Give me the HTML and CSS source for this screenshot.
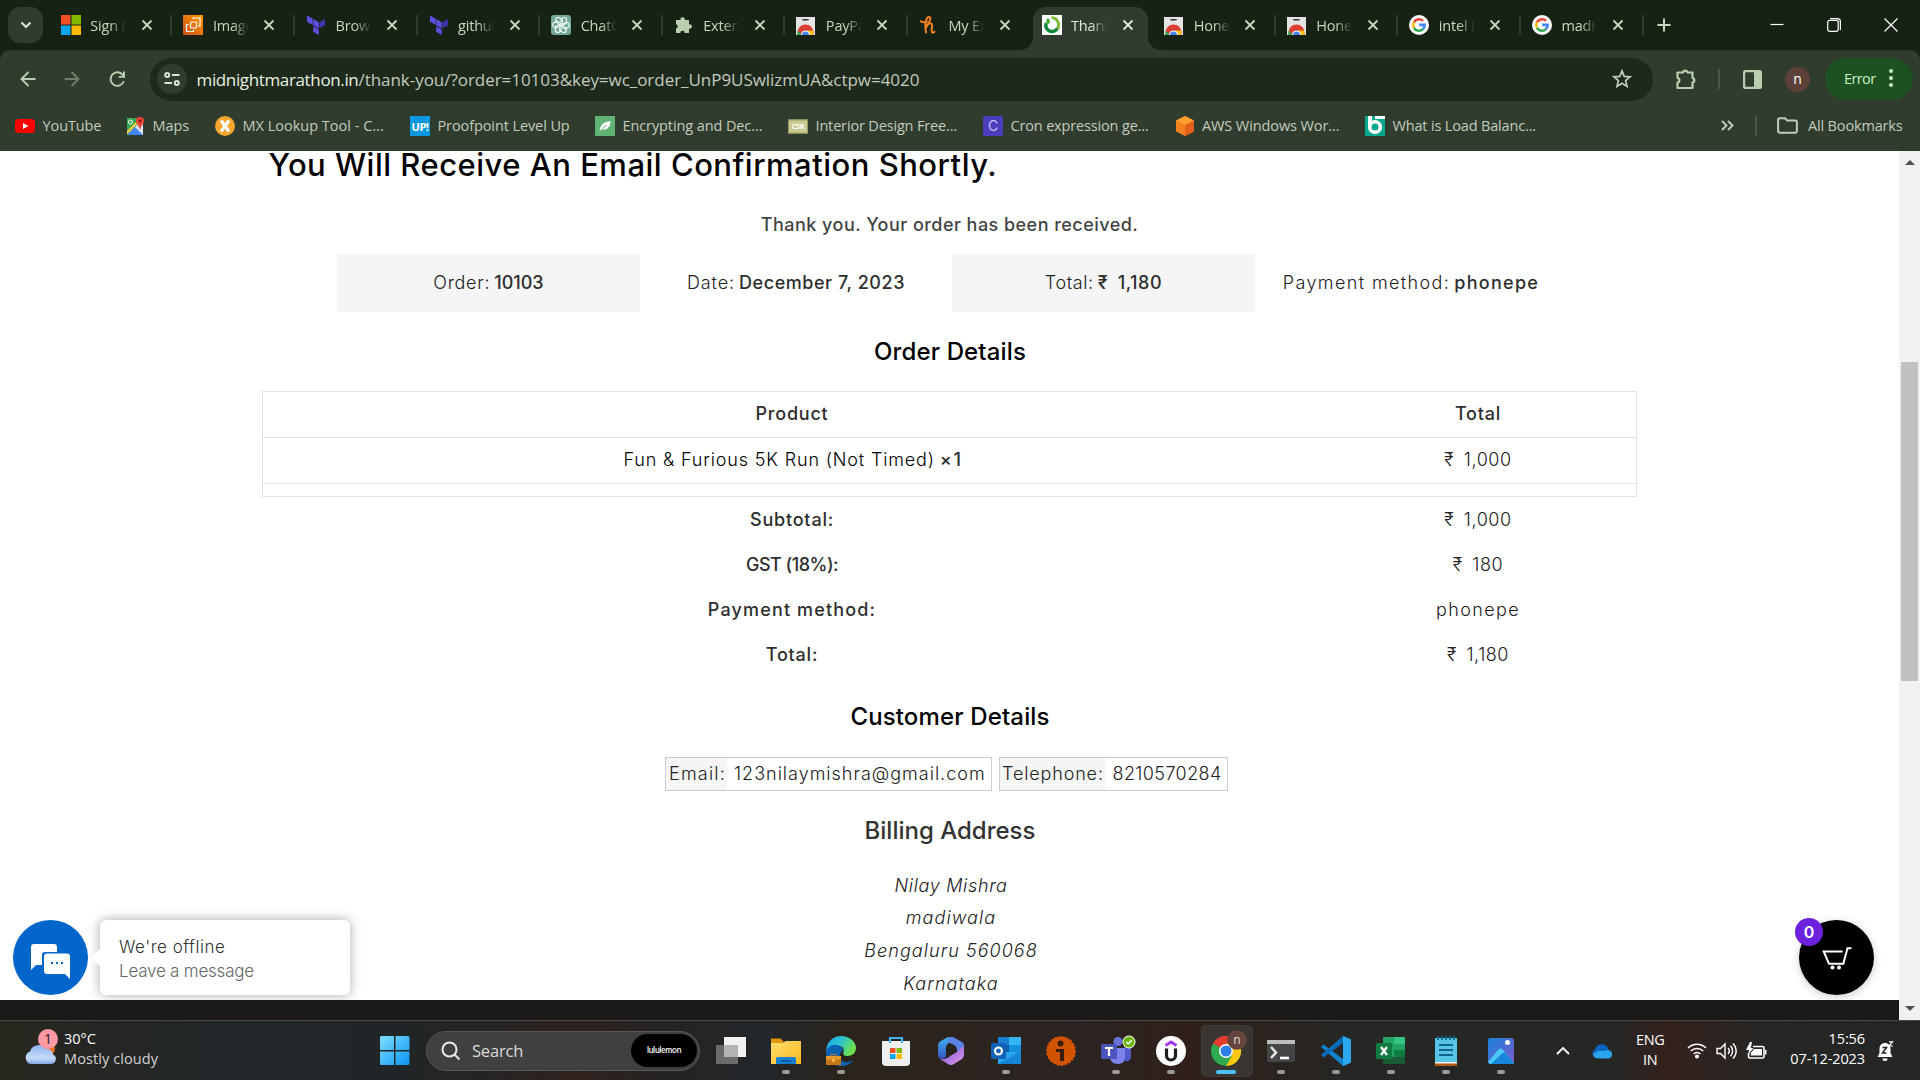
FILE: index.html
```html
<!DOCTYPE html>
<html lang="en">
<head>
<meta charset="utf-8">
<title>Thank You</title>
<link rel="stylesheet" href="styles.css">
</head>
<body>
<svg class="defs" width="0" height="0">
  <defs>
    <linearGradient id="gWin" x1="0" y1="0" x2="1" y2="1"><stop offset="0" stop-color="#7fe0ff"/><stop offset="1" stop-color="#0a93f5"/></linearGradient>
    <linearGradient id="gCloud" x1="0" y1="0" x2="0" y2="1"><stop offset="0" stop-color="#8db4f3"/><stop offset=".7" stop-color="#c6dbfa"/><stop offset="1" stop-color="#7fa5e2"/></linearGradient>
    <linearGradient id="gAws" x1="0" y1="1" x2="1" y2="0"><stop offset="0" stop-color="#c8511b"/><stop offset="1" stop-color="#f90"/></linearGradient>
    <linearGradient id="gEdge" x1="0" y1="0" x2="1" y2=".4"><stop offset="0" stop-color="#1b9de2"/><stop offset=".5" stop-color="#2bc3d2"/><stop offset="1" stop-color="#6be04b"/></linearGradient>
    <linearGradient id="gFolder" x1="0" y1="0" x2="1" y2="1"><stop offset="0" stop-color="#ffdf71"/><stop offset="1" stop-color="#f9b81d"/></linearGradient>
    <linearGradient id="gCopA" x1="0" y1="0" x2="0" y2="1"><stop offset="0" stop-color="#3bb4ee"/><stop offset="1" stop-color="#3a4fc4"/></linearGradient>
    <linearGradient id="gCopB" x1="0" y1="0" x2="1" y2="1"><stop offset="0" stop-color="#6a4fd8"/><stop offset="1" stop-color="#e79be8"/></linearGradient>
    <linearGradient id="gPhoto" x1="0" y1="0" x2="1" y2="1"><stop offset="0" stop-color="#1685dc"/><stop offset="1" stop-color="#8155c9"/></linearGradient>
    <linearGradient id="gGreen" x1="0" y1="1" x2="1" y2="0"><stop offset="0" stop-color="#0d8a3c"/><stop offset="1" stop-color="#9ac93a"/></linearGradient>
    <symbol id="x" viewBox="0 0 12 12"><path d="M1.500 1.500l9 9M10.500 1.500l-9 9" stroke="currentColor" stroke-width="1.800"/></symbol>
    <symbol id="terraform" viewBox="0 0 20 20"><path d="M1 .5l5.600 3.200v6.300L1 6.800z M7.200 4l5.600 3.200v6.300L7.200 10.300z M7.200 11.200l5.600 3.200V20l-5.600-3.200z" fill="#5f4ee0"/><path d="M19 4v6.300l-5.600 3.200V7.200z" fill="#4234a8"/></symbol>
    <symbol id="store" viewBox="0 0 20 20"><path d="M0 2h19v18H0z" fill="#e4e4e4"/><path d="M7 4.800h5" stroke="#333" stroke-width="1.600" stroke-linecap="round"/><path d="M1.500 20v-2.500a8 8 0 0 1 16 0V20z" fill="#df3e34"/><path d="M1.500 20v-4.500l5 4.500z" fill="#28a34c"/><path d="M17.500 20v-4.500H11l2 4.500z" fill="#fbc417"/><path d="M5 20a4.500 4.500 0 0 1 9 0z" fill="#fff"/><path d="M6 20a3.500 3.500 0 0 1 7 0z" fill="#4286f5"/></symbol>
    <symbol id="google" viewBox="0 0 20 20"><circle cx="10" cy="10" r="10" fill="#fff"/><g fill="none" stroke-width="2.600"><path d="M5 7.200A5.700 5.700 0 0 1 14 5.900" stroke="#ea4335"/><path d="M5 12.800a5.900 5.900 0 0 1 0-5.600" stroke="#fbbc05"/><path d="M14 14.100A5.700 5.700 0 0 1 5 12.800" stroke="#34a853"/><path d="M10.200 9.900h5.400a5.600 5.600 0 0 1-1.700 4.200" stroke="#4285f4"/></g></symbol>
  </defs>
</svg>

<header class="tabstrip">
  <button class="tab-search"><svg width="12" height="8" viewBox="0 0 12 8"><path d="M1.500 1.500L6 6l4.500-4.500" fill="none" stroke="#d6e5ce" stroke-width="2.200"/></svg></button>
  <div class="tabs">
    <div class="tab"><svg class="fav" viewBox="0 0 20 20"><path d="M0 0h9.500v9.500H0z" fill="#f25022"/><path d="M10.500 0H20v9.500h-9.500z" fill="#7fba00"/><path d="M0 10.500h9.500V20H0z" fill="#00a4ef"/><path d="M10.500 10.500H20V20h-9.500z" fill="#ffb900"/></svg><span>Sign in</span><svg class="close"><use href="#x"/></svg></div>
    <div class="tab"><svg class="fav" viewBox="0 0 20 20"><path d="M0 0h20v20H0z" fill="url(#gAws)"/><g fill="none" stroke="#fff" stroke-width="1.200"><rect x="7.500" y="7" width="6" height="6" rx="1"/><path d="M10 4V3h7v8h-2M5.500 9.500H3.500v7h7V15"/></g></svg><span>Images</span><svg class="close"><use href="#x"/></svg></div>
    <div class="tab"><svg class="fav"><use href="#terraform"/></svg><span>Brows</span><svg class="close"><use href="#x"/></svg></div>
    <div class="tab"><svg class="fav"><use href="#terraform"/></svg><span>github</span><svg class="close"><use href="#x"/></svg></div>
    <div class="tab"><svg class="fav" viewBox="0 0 20 20"><rect width="20" height="20" rx="3" fill="#74aa9c"/><g fill="none" stroke="#fff" stroke-width="1.100"><path id="petal" d="M10 7.200V5.500a3 3 0 0 1 5.500-1.600v4.300L10 11.300"/><use href="#petal" transform="rotate(60 10 10)"/><use href="#petal" transform="rotate(120 10 10)"/><use href="#petal" transform="rotate(180 10 10)"/><use href="#petal" transform="rotate(240 10 10)"/><use href="#petal" transform="rotate(300 10 10)"/></g></svg><span>ChatG</span><svg class="close"><use href="#x"/></svg></div>
    <div class="tab"><svg class="fav" viewBox="0 0 20 20"><path d="M2 5h4.500a2.200 2.200 0 1 1 4.200 0H15v4.300a2.300 2.300 0 1 1 0 4.400V18h-4.300a2.200 2.200 0 0 0-4.400 0H2v-4.500a2.200 2.200 0 0 0 0-4.300z" fill="#b9cfb0"/></svg><span>Exten</span><svg class="close"><use href="#x"/></svg></div>
    <div class="tab"><svg class="fav"><use href="#store"/></svg><span>PayPa</span><svg class="close"><use href="#x"/></svg></div>
    <div class="tab"><svg class="fav" viewBox="0 0 20 20"><path d="M1.800 6.200c1.500 1.500 3.700 1.400 6 .3M7 17.500c-1-6-.8-11 .8-14 1.200-2.300 3.700-2 3.500.2C11 7 8.500 9 7.300 12c1.200-2.500 3-4 4.700-3.600 2.300.6.500 4.600.6 7 .1 2.700 1.900 2.700 2.700 1.300" fill="none" stroke="#f5821f" stroke-width="2" stroke-linecap="round" stroke-linejoin="round"/></svg><span>My Ex</span><svg class="close"><use href="#x"/></svg></div>
    <div class="tab active"><svg class="shape" viewBox="0 0 141 43"><path d="M0 43a13 13 0 0 0 13-13V13A13 13 0 0 1 26 0h89a13 13 0 0 1 13 13v17a13 13 0 0 0 13 13z" fill="#303d2e"/></svg><svg class="fav" viewBox="0 0 20 20"><path d="M0 0h20v20H0z" fill="#fff"/><path d="M4.200 8A6 6 0 1 0 15.800 12.500" fill="none" stroke="#0f8a3c" stroke-width="3.400"/><path d="M9.500 2.500A7.500 7.500 0 0 1 15.500 14" fill="none" stroke="#7dbb3a" stroke-width="2.800"/><path d="M5.500 3c2 .8 2.800 2.200 2.600 4.500L5.500 10C3.500 7.500 4 5 5.500 3z" fill="#4fae3b"/></svg><span>Thank</span><svg class="close"><use href="#x"/></svg></div>
    <div class="tab"><svg class="fav"><use href="#store"/></svg><span>Honey</span><svg class="close"><use href="#x"/></svg></div>
    <div class="tab"><svg class="fav"><use href="#store"/></svg><span>Honey</span><svg class="close"><use href="#x"/></svg></div>
    <div class="tab"><svg class="fav"><use href="#google"/></svg><span>intel l</span><svg class="close"><use href="#x"/></svg></div>
    <div class="tab"><svg class="fav"><use href="#google"/></svg><span>madiw</span><svg class="close"><use href="#x"/></svg></div>
  </div>
  <svg class="new-tab" width="14" height="14" viewBox="0 0 14 14"><path d="M7 .5v13M.5 7h13" stroke="#c5d8bc" stroke-width="2"/></svg>
  <div class="win-controls">
    <svg width="14" height="14" viewBox="0 0 14 14"><path d="M.5 6.500h13" stroke="#fff" stroke-width="1.200"/></svg>
    <svg width="14" height="14" viewBox="0 0 14 14" fill="none" stroke="#fff" stroke-width="1.200"><rect x=".7" y="2.300" width="10.500" height="11" rx="2"/><path d="M3 .7h7.500a3 3 0 0 1 2.900 3V12"/></svg>
    <svg width="14" height="14" viewBox="0 0 14 14"><path d="M.5.5l13 13M13.500.5l-13 13" stroke="#fff" stroke-width="1.200"/></svg>
  </div>
</header>

<div class="toolbar-wrap">
<div class="toolbar">
  <div class="nav">
    <svg width="16" height="16" viewBox="0 0 16 16"><path d="M15.500 8H1.500M8.500 1L1.500 8l7 7" fill="none" stroke="#b9cfb0" stroke-width="1.900"/></svg>
    <svg width="16" height="16" viewBox="0 0 16 16"><path d="M.5 8h14M7.500 1l7 7-7 7" fill="none" stroke="#6f7f69" stroke-width="1.900"/></svg>
    <svg width="17" height="17" viewBox="0 0 17 17"><path d="M14.800 10.200A6.800 6.800 0 1 1 13.800 4l1 1.200" fill="none" stroke="#b9cfb0" stroke-width="1.900"/><path d="M16 .5v6.300H9.700V5H14V.5z" fill="#b9cfb0"/></svg>
  </div>
  <div class="omnibox">
    <span class="site-info"><svg width="16" height="14" viewBox="0 0 16 14" fill="none" stroke="#d6e5ce" stroke-width="2"><circle cx="3.200" cy="3" r="2"/><path d="M8 3h7.500M.5 11H8"/><circle cx="12.800" cy="11" r="2"/></svg></span>
    <span class="url"><b>midnightmarathon.in</b><i>/thank-you/?order=10103&amp;key=wc_order_UnP9USwlizmUA&amp;ctpw=4020</i></span>
    <svg width="20" height="20" viewBox="0 0 20 20"><path d="M10 1.900l2.200 5.500 5.900.4-4.500 3.800 1.400 5.800L10 14.200l-5 3.200 1.400-5.800L1.900 7.800l5.900-.4z" fill="none" stroke="#c3cabf" stroke-width="1.700"/></svg>
  </div>
  <div class="tools">
    <svg width="22" height="22" viewBox="0 0 22 22"><path d="M2.500 4.500H8a2.300 2.300 0 0 1 4.500 0h5V10a2.300 2.300 0 0 1 0 4.500v5.500h-15v-5.500a2.400 2.400 0 0 0 0-4.700z" fill="none" stroke="#b9cfb0" stroke-width="2.200" stroke-linejoin="round"/></svg>
    <i class="vsep"></i>
    <svg width="19" height="19" viewBox="0 0 19 19"><rect x="1.100" y="1.100" width="16.800" height="16.800" rx="1.500" fill="none" stroke="#b9cfb0" stroke-width="2.200"/><path d="M11 1h7v17h-7z" fill="#b9cfb0"/></svg>
    <span class="avatar">n</span>
    <span class="error">Error<svg width="4" height="18" viewBox="0 0 4 18" fill="#c9efc0"><circle cx="2" cy="2" r="2"/><circle cx="2" cy="9" r="2"/><circle cx="2" cy="16" r="2"/></svg></span>
  </div>
</div>
</div>

<nav class="bookmarks">
  <div class="items">
    <a><svg viewBox="0 0 20 20"><rect y="3" width="20" height="14" rx="3.500" fill="#f00"/><path d="M8 7l5.500 3L8 13z" fill="#fff"/></svg>YouTube</a>
    <a><svg viewBox="0 0 20 20"><path d="M2 2h16v17H2z" fill="#34a853"/><path d="M2 19L18 3v16z" fill="#d9e4ee"/><path d="M2 19l8-8 8 8z" fill="#4285f4"/><path d="M2 15l12-12h3L2 18z" fill="#fbcd3c"/><path d="M15 1a4 4 0 0 1 4 4c0 3-3 4-4 9-1-5-4-6-4-9a4 4 0 0 1 4-4z" fill="#ea4335"/><circle cx="15" cy="5" r="1.500" fill="#7d1a12"/><circle cx="5.500" cy="6" r="2" fill="none" stroke="#fff"/></svg>Maps</a>
    <a class="mx"><svg viewBox="0 0 20 20"><circle cx="10" cy="10" r="10" fill="#f7a52c"/><path d="M6 4.500l8 11M14 4.500l-8 11" stroke="#fff" stroke-width="3.200"/></svg>MX Lookup Tool - C...</a>
    <a><svg viewBox="0 0 20 20"><path d="M0 0h20v20H0z" fill="#0a98e0"/><text x="10" y="15" class="up">UP!</text></svg>Proofpoint Level Up</a>
    <a><svg viewBox="0 0 20 20"><path d="M0 0h20v20H0z" fill="#62b273"/><path d="M4.500 16C5 9 8 6 15.500 5c0 6-3 9-8.500 8.500z" fill="#fff"/><path d="M4.500 16l7-7" stroke="#62b273"/></svg>Encrypting and Dec...</a>
    <a class="tight"><svg viewBox="0 0 20 20"><path d="M0 3.500h20v14H0z" fill="#c9ca94"/><path d="M.5 4h19v13H.5z" fill="none" stroke="#9a9a5a"/><text x="10" y="13" class="csk">CSK</text></svg>Interior Design Free...</a>
    <a class="tight"><svg viewBox="0 0 20 20"><rect width="20" height="20" rx="2" fill="#4b3dbb"/><text x="10" y="15" class="cron">C</text></svg>Cron expression ge...</a>
    <a><svg viewBox="0 0 20 20"><path d="M10 0l9 4.500v11L10 20l-9-4.500v-11z" fill="#f58220"/><path d="M10 0l9 4.500L10 9 1 4.500z" fill="#fda02e"/><path d="M10 9l9-4.500v11L10 20z" fill="#e4601b"/></svg>AWS Windows Wor...</a>
    <a class="tight"><svg viewBox="0 0 20 20"><path d="M0 0h20v20H0z" fill="#05a88b"/><path d="M5 0v10" stroke="#fff" stroke-width="4"/><circle cx="10" cy="11" r="5.300" fill="none" stroke="#fff" stroke-width="3.600"/><path d="M10 0h10v3H10z" fill="#fff"/></svg>What is Load Balanc...</a>
  </div>
  <svg class="more" width="13" height="11" viewBox="0 0 13 11"><path d="M1 1l4.500 4.500L1 10M7 1l4.500 4.500L7 10" fill="none" stroke="#c3cabf" stroke-width="1.900"/></svg>
  <i class="vsep"></i>
  <a class="all"><svg viewBox="0 0 21 17"><path d="M1.100 3a1.800 1.800 0 0 1 1.800-1.800h5l2.300 2.300h8a1.800 1.800 0 0 1 1.700 1.800V14a1.800 1.800 0 0 1-1.800 1.800H2.900A1.800 1.800 0 0 1 1.100 14z" fill="none" stroke="#c3cabf" stroke-width="2"/></svg>All Bookmarks</a>
</nav>

<div class="viewport">
  <main class="page">
    <div class="content">
      <h1>You Will Receive An Email Confirmation Shortly.</h1>
      <p class="thanks">Thank you. Your order has been received.</p>
      <ul class="overview">
        <li><span class="k-order">Order:</span> <strong class="v-order">10103</strong></li>
        <li><span class="k-date">Date:</span> <strong class="v-date">December 7, 2023</strong></li>
        <li><span class="k-total">Total:</span> <strong class="amount">₹ 1,180</strong></li>
        <li><span class="k-pay">Payment method:</span> <strong class="v-pay">phonepe</strong></li>
      </ul>
      <h2 class="h-order">Order Details</h2>
      <div class="table">
        <div class="row head"><b>Product</b><b>Total</b></div>
        <div class="row"><span class="item">Fun &amp; Furious 5K Run (Not Timed) <strong>× 1</strong></span><span class="amount">₹ 1,000</span></div>
        <div class="row empty"></div>
      </div>
      <div class="totals">
        <div class="row"><b>Subtotal:</b><span class="amount">₹ 1,000</span></div>
        <div class="row"><b class="gst">GST (18%):</b><span class="amount">₹ 180</span></div>
        <div class="row"><b class="pm">Payment method:</b><span class="v-phone">phonepe</span></div>
        <div class="row"><b>Total:</b><span class="amount">₹ 1,180</span></div>
      </div>
      <h2 class="h-customer">Customer Details</h2>
      <dl class="customer">
        <div><dt>Email:</dt><dd>123nilaymishra@gmail.com</dd></div>
        <div><dt class="tel">Telephone:</dt><dd class="telno">8210570284</dd></div>
      </dl>
      <h2 class="h-billing">Billing Address</h2>
      <address><span class="a1">Nilay Mishra</span><span>madiwala</span><span>Bengaluru 560068</span><span>Karnataka</span></address>
    </div>
    <footer class="page-footer"></footer>
    <div class="chat">
      <span class="chat-btn"><svg width="40" height="36" viewBox="0 0 40 36"><path d="M3 0h20a3 3 0 0 1 3 3v5H14a3 3 0 0 0-3 3v10H5l-5 5V3a3 3 0 0 1 3-3z" fill="#fff"/><path d="M16 9.500h20a3 3 0 0 1 3 3V35l-5-5H16a3 3 0 0 1-3-3V12.500a3 3 0 0 1 3-3z" fill="#fff"/><path d="M20 18h2v2h-2zM25 18h2v2h-2zM30 18h2v2h-2z" fill="#06c"/></svg></span>
      <div class="bubble"><p>We're offline</p><p class="sub">Leave a message</p></div>
    </div>
    <div class="cart"><svg width="30" height="23" viewBox="0 0 30 23"><path d="M29.500 1.200h-4L21.300 16.800H7L1.700 4.500h19" fill="none" stroke="#fff" stroke-width="2"/><circle cx="10.500" cy="20.500" r="2" fill="#fff"/><circle cx="17" cy="20.500" r="2" fill="#fff"/></svg><span class="count">0</span></div>
  </main>
  <div class="scrollbar"><i class="up-arrow"></i><i class="thumb"></i><i class="down-arrow"></i></div>
</div>

<footer class="taskbar">
  <div class="weather">
    <svg width="36" height="36" viewBox="0 0 36 36"><circle cx="25" cy="20" r="6" fill="#f2701d"/><path d="M7 35a6.500 6.500 0 0 1-1-12.500A9 9 0 0 1 22 20a6 6 0 0 1 7 5.500A5 5 0 0 1 27 35z" fill="url(#gCloud)"/><circle cx="24" cy="10" r="10" fill="#ff99a4"/><text x="24" y="15" class="wbadge">1</text></svg>
    <div><p>30°C</p><p class="cond">Mostly cloudy</p></div>
  </div>
  <svg class="start" width="30" height="30" viewBox="0 0 30 30" fill="url(#gWin)"><path d="M0 1.500A1.500 1.500 0 0 1 1.500 0H14v14H0zM15.500 0H28a1.500 1.500 0 0 1 1.500 1.500V14h-14zM0 15.500h14V29H1.500A1.500 1.500 0 0 1 0 27.500zM15.500 15.500h14v12A1.500 1.500 0 0 1 28 29H15.500z"/></svg>
  <div class="search"><svg width="20" height="20" viewBox="0 0 20 20" fill="none" stroke="#e8e8e8" stroke-width="2"><circle cx="8.500" cy="8.500" r="7"/><path d="M13.500 13.500l5 5"/></svg><span>Search</span><em>lululemon</em></div>
  <div class="apps">
    <span><svg viewBox="0 0 30 30"><path d="M0 9h22v19H0z" fill="#6a6a6a"/><path d="M8 1h22v20H8z" fill="#f1f1f1"/><path d="M8 9h14v12H8z" fill="#b4b4b4"/></svg></span>
    <span class="run"><svg viewBox="0 0 30 30"><path d="M0 2.500h9.500l3 3V12H0z" fill="#e0950d"/><path d="M0 7h12l2.500-2H30v23H0z" fill="url(#gFolder)"/><path d="M5 28v-5a2 2 0 0 1 2-2h16a2 2 0 0 1 2 2v5z" fill="#1480d4"/><path d="M10 25h10" stroke="#0a4f94" stroke-width="1.500"/></svg></span>
    <span class="run"><svg viewBox="0 0 30 30"><path d="M0 16C0 6 7 0 15 0s15 5 15 12c0 5-4 8-8.500 8-3 0-5-1.500-4-4 .8-2 0-6-5-6C7 10 1 12 0 16z" fill="url(#gEdge)"/><path d="M0 16c1-5 6-8 11-7 4 .5 6 3 5.500 6-1 0-3 2-2.500 6 .5 5 6 7 13 3-2 4-7 6-12 6C6 30 0 24 0 16z" fill="#0c62b4"/><path d="M0 20h15v9H0z" fill="#c5761a"/><path d="M0 20h15v3.500H0z" fill="#e39b2b"/><path d="M5 20v-1.500h5V20" fill="none" stroke="#c5761a"/><path d="M6.500 23h2v3h-2z" fill="#ffd35c"/></svg></span>
    <span><svg viewBox="0 0 30 30"><path d="M1 5h28v21a4 4 0 0 1-4 4H5a4 4 0 0 1-4-4z" fill="#efefef"/><path d="M9 7V2h12v5" fill="none" stroke="#3db4ee" stroke-width="2.200"/><path d="M9 12h5.500v5H9z" fill="#f25022"/><path d="M15.500 12H21v5h-5.500z" fill="#7fba00"/><path d="M9 18h5.500v5H9z" fill="#00a4ef"/><path d="M15.500 18H21v5h-5.500z" fill="#ffb900"/></svg></span>
    <span><svg viewBox="0 0 30 30"><path d="M12 1L4 5.500A5 5 0 0 0 2 10v9c0 3 2 4.500 4.500 3.500L10 21v-9c0-2.500 1-4 3-5l4-6z" fill="url(#gCopA)"/><path d="M12 1h5l9 5a4 4 0 0 1 2 4v6l-7 2v-4c0-2-1-4-3-5l-6-3z" fill="#5b83e6"/><path d="M28 10v9a5 5 0 0 1-2 4l-8 5c-2 1.300-4 1.300-6 0l-8-5c5 .5 8-1 10-3l7-4c2-1.500 3-4 7-6z" fill="url(#gCopB)"/><circle cx="15" cy="14" r="4.500" fill="#26231f"/></svg></span>
    <span class="run"><svg viewBox="0 0 30 30"><path d="M7 1h23v27H7z" fill="#1a7fd0"/><path d="M18 1h12v8H18z" fill="#35b5f1"/><path d="M18 9h12v7H18z" fill="#1490df"/><path d="M7 9h11v7H7z" fill="#0f5ea8"/><path d="M7 16h23v12H7z" fill="#2ba5ea"/><path d="M7 28l23-13v13z" fill="#1685d6"/><rect y="7" width="15" height="16" rx="1.500" fill="#0f62b5"/><circle cx="7.500" cy="15" r="3.500" fill="none" stroke="#fff" stroke-width="2.200"/></svg></span>
    <span><svg viewBox="0 0 30 30"><circle cx="15" cy="15" r="14.200" fill="#d35400" stroke="#d35400" stroke-width="1.600" stroke-dasharray="2 2"/><circle cx="14.500" cy="7.500" r="3" fill="#3a1c0b"/><path d="M10 13h8v12h-4v-9h-4z" fill="#3a1c0b"/></svg></span>
    <span class="run"><svg viewBox="0 0 30 30"><circle cx="17" cy="5.500" r="4.500" fill="#6a75da"/><circle cx="26" cy="9" r="3" fill="#5059c9"/><path d="M20 12h10v8c0 4-3 6-6 5z" fill="#5059c9"/><path d="M9 12h15v9c0 5-3 7-7.500 7S9 25 9 21z" fill="#7b83eb"/><rect y="8" width="16" height="15" rx="1.500" fill="#4b53bc"/><path d="M4 12h8M8 12v8" stroke="#fff" stroke-width="2.200"/><circle cx="28" cy="6" r="6.500" fill="#fff"/><circle cx="28" cy="6" r="5.500" fill="#6bb700"/><path d="M25.300 6l2 2 3.500-4" fill="none" stroke="#fff" stroke-width="1.500"/></svg></span>
    <span class="run"><svg viewBox="0 0 30 30"><circle cx="15" cy="15" r="15" fill="#fff"/><path d="M9.500 9.500L15 6l5.500 3.500" fill="none" stroke="#a435f0" stroke-width="3"/><path d="M10.500 12.500v7a4.500 4.500 0 0 0 9 0v-7" fill="none" stroke="#1c1d1f" stroke-width="3.200"/></svg></span>
    <span class="current"><svg viewBox="0 0 30 30"><circle cx="15" cy="15" r="15" fill="#2da94f"/><path d="M15 15L2 7.500A15 15 0 0 1 28 7.500z" fill="#e33b2e"/><path d="M2 7.500A15 15 0 0 1 15 0a15 15 0 0 1 13 7.500H15z" fill="#e33b2e"/><path d="M28 7.500H15l6.500 11.300L15 30A15 15 0 0 0 28 7.500z" fill="#fdc70f"/><circle cx="15" cy="15" r="7" fill="#fff"/><circle cx="15" cy="15" r="5.500" fill="#2f7de9"/><circle cx="26" cy="4" r="9.800" fill="#64443d"/><text x="26" y="8" class="prof">n</text></svg></span>
    <span class="run"><svg viewBox="0 0 30 30"><rect x="1" y="4" width="28" height="22" rx="1.500" fill="#454548"/><path d="M1 4h28v4H1z" fill="#bdbdbd"/><path d="M5 11l5 5.500L5 22" fill="none" stroke="#e6e6e6" stroke-width="2.600"/><path d="M14 22h9" stroke="#fff" stroke-width="2.600"/></svg></span>
    <span class="run"><svg viewBox="0 0 30 30"><path d="M22 0l8 3.500v23L22 30 0 11l2.500-2.500L22 23z" fill="#1283cf"/><path d="M22 0v7L2.500 21.500 0 19z" fill="#0a6cb5"/><path d="M22 0l8 3.500v23L22 30z" fill="#2aa9f0"/></svg></span>
    <span class="run"><svg viewBox="0 0 30 30"><path d="M7 1h22v27H7z" fill="#21a366"/><path d="M18 1h11v7H18z" fill="#33c481"/><path d="M18 14h11v7H18z" fill="#107c41"/><path d="M7 21h22v7H7z" fill="#185c37"/><rect y="7" width="16" height="16" rx="1.500" fill="#107c41"/><path d="M5 11l6 8M11 11l-6 8" stroke="#fff" stroke-width="2.200"/></svg></span>
    <span class="run"><svg viewBox="0 0 30 30"><path d="M4 27h22v3H4z" fill="#b3560f"/><path d="M4 2h22v24H4z" fill="#58c4e4"/><path d="M4 26h22v1.500H4z" fill="#f0f0f0"/><path d="M7 0v4M11 0v4M15 0v4M19 0v4M23 0v4" stroke="#0d6c93" stroke-width="1.800"/><path d="M8 9h14M8 14h14M8 19h14" stroke="#11658a" stroke-width="1.800"/></svg></span>
    <span class="run"><svg viewBox="0 0 30 30"><rect x="2" y="2" width="26" height="26" rx="2.500" fill="url(#gPhoto)"/><path d="M2 26l10.500-12.500a2.500 2.500 0 0 1 4 0L28 27l-2 1H4z" fill="#49c8f5"/><path d="M5 28l11-10.500a2.500 2.500 0 0 1 3.500 0L28 27l-2 1z" fill="#1785dc"/><circle cx="21.500" cy="6.500" r="2.500" fill="#fff"/></svg></span>
  </div>
  <div class="tray">
    <svg width="14" height="9" viewBox="0 0 14 9"><path d="M1 8l6-6 6 6" fill="none" stroke="#fff" stroke-width="1.800"/></svg>
    <svg width="21" height="16" viewBox="0 0 21 16"><path d="M4.500 15A4.500 4.500 0 0 1 3 6.500a7 7 0 0 1 13-1.500l1 10z" fill="#0a64bd"/><path d="M6 15.500c-3 0-5-2-5-4 3-3 6-4.500 9-3.500 2 .7 4-1.500 7-.8A4.300 4.300 0 0 1 16.800 15.500z" fill="#2ba2ed"/></svg>
    <div class="lang"><p>ENG</p><p>IN</p></div>
    <svg width="20" height="17" viewBox="0 0 20 17" fill="none" stroke="#fff" stroke-width="1.500"><path d="M1 6a12.700 12.700 0 0 1 18 0M3.800 9a8.800 8.800 0 0 1 12.400 0M6.600 12a4.800 4.800 0 0 1 6.800 0"/><circle cx="10" cy="14.500" r="1.300" fill="#fff"/></svg>
    <svg width="21" height="18" viewBox="0 0 21 18" fill="none" stroke="#fff" stroke-width="1.400"><path d="M1 6.500h3.500L9 2v14l-4.500-4.500H1zM12 6a4.500 4.500 0 0 1 0 6M14.500 3.800a7.500 7.500 0 0 1 0 10.400M17 1.500a10.500 10.500 0 0 1 0 15"/></svg>
    <svg width="21" height="18" viewBox="0 0 21 18"><path d="M7 4.500h9.500a1.500 1.500 0 0 1 1.500 1.500v8.500a1.500 1.500 0 0 1-1.500 1.500H4a1.500 1.500 0 0 1-1.500-1.500V11" fill="none" stroke="#fff" stroke-width="1.600"/><path d="M8 7h8v6.500H4.800V11zM19 8h1.500v4.500H19zM4 0L0 8h3l-1 5 5.500-7H4.800L6 0z" fill="#fff"/></svg>
    <div class="clock"><p>15:56</p><p>07-12-2023</p></div>
    <svg width="17" height="20" viewBox="0 0 17 20"><path d="M8 2C4.500 2 2.500 4.500 2.500 8v4L.5 16h15l-2-4V8c0-3.500-2-6-5.500-6zM5.500 17.500h5a2.500 2.500 0 0 1-5 0z" fill="#fff"/><path d="M5.500 6.500h4l-4 5.500h4" fill="none" stroke="#222" stroke-width="1.500"/><path d="M12 .8h3.500L12 5h4" fill="none" stroke="#fff" stroke-width="1.200"/></svg>
  </div>
</footer>
</body>
</html>
```
FILE: styles.css
```css
* { box-sizing: border-box; }
body {
  margin: 0;
  width: 1920px;
  height: 1080px;
  overflow: hidden;
  display: flex;
  flex-direction: column;
  font-family: "Open Sans", "Noto Sans", sans-serif;
  background: #fff;
}
p, h1, h2, ul, dl, dd { margin: 0; padding: 0; font-weight: inherit; }
svg { flex: none; display: block; }
.defs { position: absolute; }

/* Tab strip */
.tabstrip { height: 50px; flex: none; background: #162314; display: flex; align-items: center; }
.tab-search { margin-left: 8px; width: 35px; height: 36px; border: 0; border-radius: 12px; background: #303d2e; display: flex; align-items: center; justify-content: center; padding: 0; }
.tabs { display: flex; margin-left: 5.800px; height: 50px; }
.tab { position: relative; width: 122.600px; padding-left: 12px; display: flex; align-items: center; color: #c5d8bc; font-size: 14.500px; }
.tab::after { content: ""; position: absolute; right: -1px; top: 15px; width: 2px; height: 20px; background: #303d2e; }
.tab:has(+ .active)::after, .tab.active::after { display: none; }
.tab .fav { width: 20px; height: 20px; z-index: 1; }
.tab span { margin-left: 9.500px; width: 36px; overflow: hidden; white-space: nowrap; letter-spacing: -.2px; mask-image: linear-gradient(90deg, #000 55%, transparent); z-index: 1; }
.tab .close { width: 12px; height: 12px; margin-left: 14.500px; z-index: 1; }
.tab.active { color: #dfead9; }
.tab .shape { position: absolute; left: -9.500px; top: 7px; width: 141px; height: 43px; }
.new-tab { margin-left: 14px; }
.win-controls { margin-left: auto; margin-right: 22px; display: flex; gap: 43px; }

/* Toolbar */
.toolbar-wrap { background: #162314; flex: none; }
.toolbar { height: 58px; background: #303d2e; display: flex; align-items: center; border-radius: 10px 10px 0 0; }
.nav { display: flex; gap: 28px; margin-left: 20px; width: 130px; align-items: center; }
.nav svg:last-child { margin-left: 1px; }
.omnibox { width: 1503px; height: 43px; border-radius: 22px; background: #1d291b; display: flex; align-items: center; padding: 0 21px 0 7px; }
.site-info { width: 30px; height: 30px; border-radius: 50%; background: #303d2e; display: flex; align-items: center; justify-content: center; }
.url { flex: 1; margin-left: 9.500px; font-size: 17px; color: #c3cabf; white-space: nowrap; }
.url b { font-weight: 400; color: #e8f2e2; letter-spacing: -.36px; }
.url i { font-style: normal; letter-spacing: -.04px; }
.tools { display: flex; align-items: center; flex: 1; padding-left: 22px; }
.vsep { width: 2px; height: 20px; background: #4a5b46; flex: none; }
.tools .vsep { margin: 0 23px 0 21px; }
.avatar { margin-left: 23px; width: 25px; height: 25px; border-radius: 50%; background: #5d4037; color: #fff; font-size: 14px; line-height: 23px; text-align: center; }
.error { margin-left: 15px; width: 88px; height: 42px; border-radius: 21px; background: #1e5121; color: #c9efc0; display: flex; align-items: center; justify-content: space-between; padding: 0 20px 2px 19px; font-size: 14.500px; letter-spacing: -.6px; }

/* Bookmarks */
.bookmarks { height: 43px; flex: none; background: #303d2e; display: flex; align-items: center; padding-bottom: 8px; color: #c3cabf; font-size: 14.500px; letter-spacing: -.1px; }
.items { display: grid; grid-template-columns: 110px 90px 195px 185px 193px 195px 191.500px 190.500px 200px; margin-left: 15px; width: 1706px; }
.bookmarks a { display: flex; align-items: center; gap: 7.500px; white-space: nowrap; }
.bookmarks .tight { letter-spacing: -.16px; }
.bookmarks .mx { letter-spacing: 0; }
.items svg { width: 20px; height: 20px; }
.up { font: 700 11px "Open Sans", sans-serif; fill: #fff; text-anchor: middle; letter-spacing: -.5px; }
.csk { font: 700 7px "Open Sans", sans-serif; fill: #fff; text-anchor: middle; }
.cron { font: 14px Inter, sans-serif; fill: #c9c2ff; text-anchor: middle; }
.bookmarks .vsep { margin-left: 21px; }
.bookmarks .all { margin-left: 20px; gap: 10px; letter-spacing: -.16px; }
.all svg { width: 21px; height: 17px; }

/* Web page */
.viewport { display: flex; height: 869px; flex: none; }
.page { position: relative; width: 1899px; height: 869px; overflow: hidden; display: flex; flex-direction: column; font-family: Inter, "Open Sans", sans-serif; font-size: 18px; font-weight: 300; color: #222; background: #fff; }
.content { width: 1375px; height: 849px; flex: none; margin-left: 262px; }
h1 { margin: -6px 0 0 6.500px; font-size: 31px; font-weight: 500; line-height: 39px; letter-spacing: .500px; color: #000; }
.thanks { margin-top: 25.500px; line-height: 30px; text-align: center; font-weight: 500; color: #444; letter-spacing: .46px; }
strong, .row b { font-weight: 500; color: #2e2e2e; }
.overview { list-style: none; display: grid; grid-template-columns: repeat(4, 303px); gap: 4.500px; margin: 14.500px 0 0 75px; height: 58px; }
.overview li { display: flex; align-items: center; justify-content: center; gap: 4px; white-space: nowrap; padding-bottom: 1px; }
.overview li:nth-child(odd) { background: #f5f5f5; }
.k-order { letter-spacing: .7px; }
.v-order { letter-spacing: 0; }
.k-date { letter-spacing: .9px; }
.v-date { letter-spacing: .55px; }
.k-total { letter-spacing: .6px; }
.k-pay { letter-spacing: 1.380px; }
.v-pay { letter-spacing: 1.280px; }
.amount { letter-spacing: .55px; word-spacing: 4px; }
h2 { font-size: 24px; font-weight: 500; line-height: 40px; text-align: center; color: #000; margin-top: 19.500px; padding-left: 1px; }
.h-order { letter-spacing: .14px; }
.h-customer { letter-spacing: .15px; }
.h-billing { letter-spacing: 0; color: #333; }
.table { margin-top: 19.500px; border: 1px solid #e2e2e2; }
.row { display: grid; grid-template-columns: 1058px 314px; height: 45px; line-height: 43px; text-align: center; }
.table .row + .row { border-top: 1px solid #e2e2e2; height: 46px; }
.table .row.empty { height: 13px; }
.row b { letter-spacing: .8px; }
.row .gst { letter-spacing: -.5px; }
.row .pm { letter-spacing: 1.150px; }
.v-phone { letter-spacing: 1.400px; }
.item { letter-spacing: .84px; color: #000; }
.item strong { letter-spacing: -.5px; word-spacing: -2px; margin-left: -1px; }
.totals .row { line-height: 45px; padding-left: 1px; }
.customer { display: flex; gap: 7px; margin: 20.500px 0 0 403px; height: 34px; line-height: 31px; }
.customer div { display: flex; border: 1px solid #ccc; }
dt { background: #f5f5f5; width: 61px; padding-left: 3px; letter-spacing: 1.200px; }
dd { width: 264px; padding-left: 7px; letter-spacing: 1px; }
dt.tel { width: 105.500px; letter-spacing: .85px; padding-left: 2px; }
dd.telno { width: 121.500px; letter-spacing: .4px; }
address { margin-top: 19.200px; padding-left: 3px; line-height: 32.800px; display: flex; flex-direction: column; align-items: center; letter-spacing: 1.050px; }
.a1 { letter-spacing: .68px; }
.page-footer { height: 20px; flex: none; background: #1b1a18; }

.chat { position: absolute; left: 13px; top: 769px; display: flex; gap: 12px; }
.chat-btn { width: 75px; height: 75px; border-radius: 50%; background: #06c; padding: 24px 0 0 18px; }
.bubble { position: relative; width: 250px; height: 75px; background: #fff; border-radius: 6px; box-shadow: 0 0 12px rgba(0,0,0,.35); padding: 14.500px 0 0 19px; font-size: 17px; line-height: 24px; color: #333; letter-spacing: .5px; }
.bubble::before { content: ""; position: absolute; left: -6px; top: 31px; width: 13px; height: 13px; background: #fff; transform: rotate(45deg); border-radius: 2px; }
.bubble .sub { color: #666; letter-spacing: -.22px; }
.cart { position: absolute; left: 1799px; top: 769px; width: 75px; height: 75px; border-radius: 50%; background: #000; box-shadow: 0 2px 8px rgba(0,0,0,.2); padding: 27px 0 0 23px; }
.count { position: absolute; left: -4px; top: -2px; width: 28px; height: 28px; border-radius: 50%; background: #6d21dd; color: #fff; font-size: 16px; font-weight: 600; line-height: 28px; text-align: center; }

.scrollbar { width: 21px; background: #f1f1f1; display: flex; flex-direction: column; align-items: center; }
.up-arrow { margin-top: 9px; border: 5px solid transparent; border-top: 0; border-bottom: 5px solid #505050; }
.thumb { margin-top: 197px; width: 17px; height: 319px; background: #c1c1c1; }
.down-arrow { margin: auto 0 9px; border: 5px solid transparent; border-bottom: 0; border-top: 5px solid #505050; }

/* Taskbar */
.taskbar { height: 60px; flex: none; border-top: 1px solid #454542; display: flex; align-items: center; color: #fff; font-size: 14.500px; line-height: 20px; background: linear-gradient(90deg, #28271f 0, #20262a 13%, #232526 24%, #2f211d 30%, #242424 35%, #22262a 40%, #2b241b 44%, #2b2422 56%, #302019 62%, #262624 70%, #262624 84%, #34211d 87%, #262624 92%, #242625 100%); }
.weather { display: flex; gap: 4px; width: 380px; padding-left: 24px; }
.weather svg { margin-top: -3px; }
.weather div { margin-top: -3px; }
.cond { color: #d2d2d2; letter-spacing: .1px; }
.wbadge { font: 14px "Open Sans", sans-serif; text-anchor: middle; fill: #222; }
.start { width: 30px; }
.search { margin-left: 16px; width: 274px; height: 40px; border-radius: 20px; background: #3f4040; border: 1px solid #575755; display: flex; align-items: center; padding: 0 2px 0 14px; font-size: 16.500px; color: #dcdcdc; }
.search span { margin-left: 11px; flex: 1; letter-spacing: -.2px; }
.search em { width: 66px; height: 33px; border-radius: 17px; background: #000; color: #fff; font: 600 8.500px/33px Lato, sans-serif; text-align: center; letter-spacing: -.3px; }
.apps { display: grid; grid-template-columns: repeat(15, 55.050px); margin-left: 3px; height: 59px; }
.apps span { position: relative; display: flex; align-items: center; justify-content: center; }
.apps svg { width: 30px; height: 30px; overflow: visible; position: relative; }
.apps span::after { position: absolute; bottom: 6px; height: 4px; border-radius: 2px; }
.apps .run::after { content: ""; width: 8px; background: #9a9a98; }
.apps .current::after { content: ""; width: 20px; background: #4cc2ff; }
.current::before { content: ""; position: absolute; left: 3px; top: 4px; width: 50px; height: 50px; border-radius: 5px; background: #393531; border: 1px solid #403c38; }
.prof { font: 12px "Open Sans", sans-serif; text-anchor: middle; fill: #e5dcd8; }
.tray { flex: 1; display: flex; align-items: center; padding-left: 27px; }
.tray > svg:nth-child(2) { margin-left: 22px; }
.lang { width: 40px; margin: -2px 0 0 17.500px; text-align: center; letter-spacing: -.3px; }
.lang + svg { margin-left: 17px; }
.lang + svg + svg { margin-left: 9px; }
.lang + svg + svg + svg { margin-left: 9px; }
.clock { text-align: right; margin: -3px 0 0 auto; letter-spacing: -.1px; }
.clock + svg { margin: 0 26px 0 12px; }
```
